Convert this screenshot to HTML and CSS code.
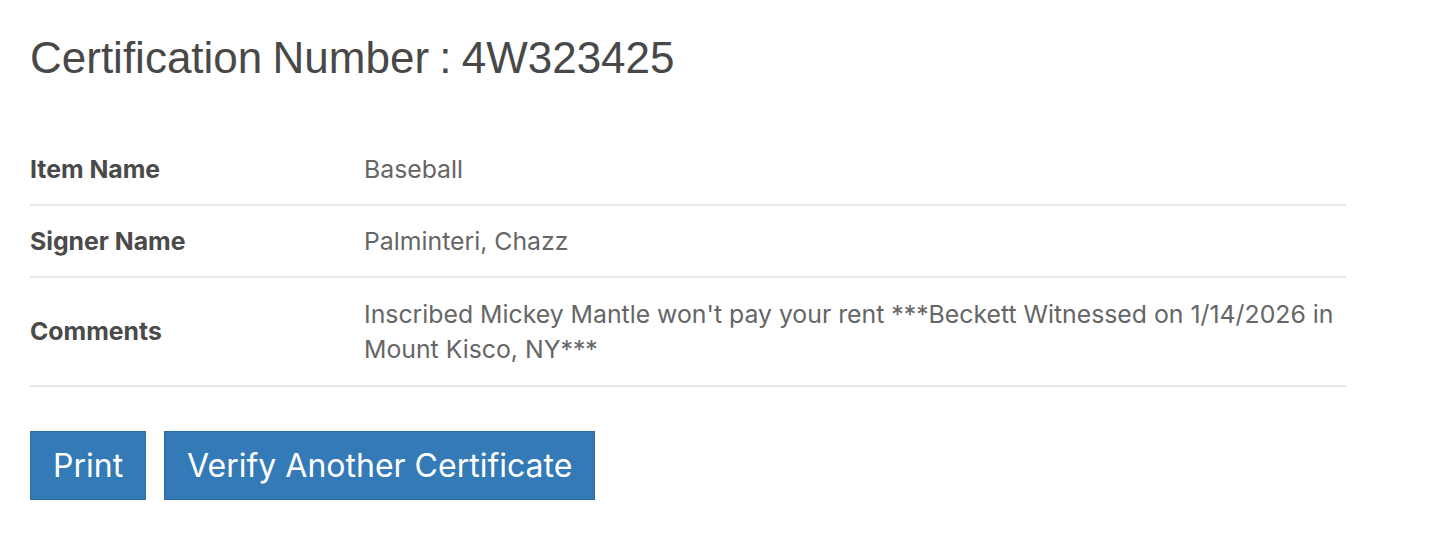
FILE: index.html
```html
<!DOCTYPE html>
<html>
<head>
<meta charset="utf-8">
<link rel="stylesheet" href="styles.css">
</head>
<body>
<div class="page">
  <h1 class="title">Certification Number : 4W323425</h1>
  <table class="details">
    <tr>
      <th>Item Name</th>
      <td>Baseball</td>
    </tr>
    <tr>
      <th>Signer Name</th>
      <td>Palminteri, Chazz</td>
    </tr>
    <tr>
      <th>Comments</th>
      <td>Inscribed Mickey Mantle won't pay your rent ***Beckett Witnessed on 1/14/2026 in Mount Kisco, NY***</td>
    </tr>
  </table>
  <div class="actions">
    <button class="btn">Print</button>
    <button class="btn">Verify Another Certificate</button>
  </div>
</div>
</body>
</html>
```

FILE: styles.css
```css
html, body {
  margin: 0;
  padding: 0;
  background: #fff;
}
body {
  font-family: Inter, "Liberation Sans", sans-serif;
  color: #555;
}
.page {
  padding: 30px 30px 0 30px;
  width: 1316px;
}
.title {
  margin: 0;
  font-family: "Liberation Sans", Arial, sans-serif;
  font-weight: 400;
  font-size: 44px;
  line-height: 56px;
  color: #484848;
  word-spacing: -2px;
}
.details {
  margin-top: 48px;
  width: 100%;
  border-collapse: collapse;
}
.details tr {
  border-bottom: 2px solid #e8e8e8;
}
.details th {
  width: 334px;
  text-align: left;
  font-weight: 700;
  font-size: 24.8px;
  color: #4a4a4a;
  padding: 17.5px 0 17.5px 0;
  line-height: 35px;
  vertical-align: middle;
}
.details td {
  font-size: 24.8px;
  color: #666;
  padding: 17.5px 0 17.5px 0;
  line-height: 35px;
}
.details tr:last-child td {
  padding: 19px 0 18px 0;
}
.actions {
  display: flex;
  gap: 18px;
  margin-top: 44px;
}
.btn {
  font-family: Inter, "Liberation Sans", sans-serif;
  background: #337ab7;
  border: 1px solid #2e6da4;
  color: #fff;
  font-size: 32px;
  height: 69px;
  padding: 0 22px;
  border-radius: 0;
}
```
